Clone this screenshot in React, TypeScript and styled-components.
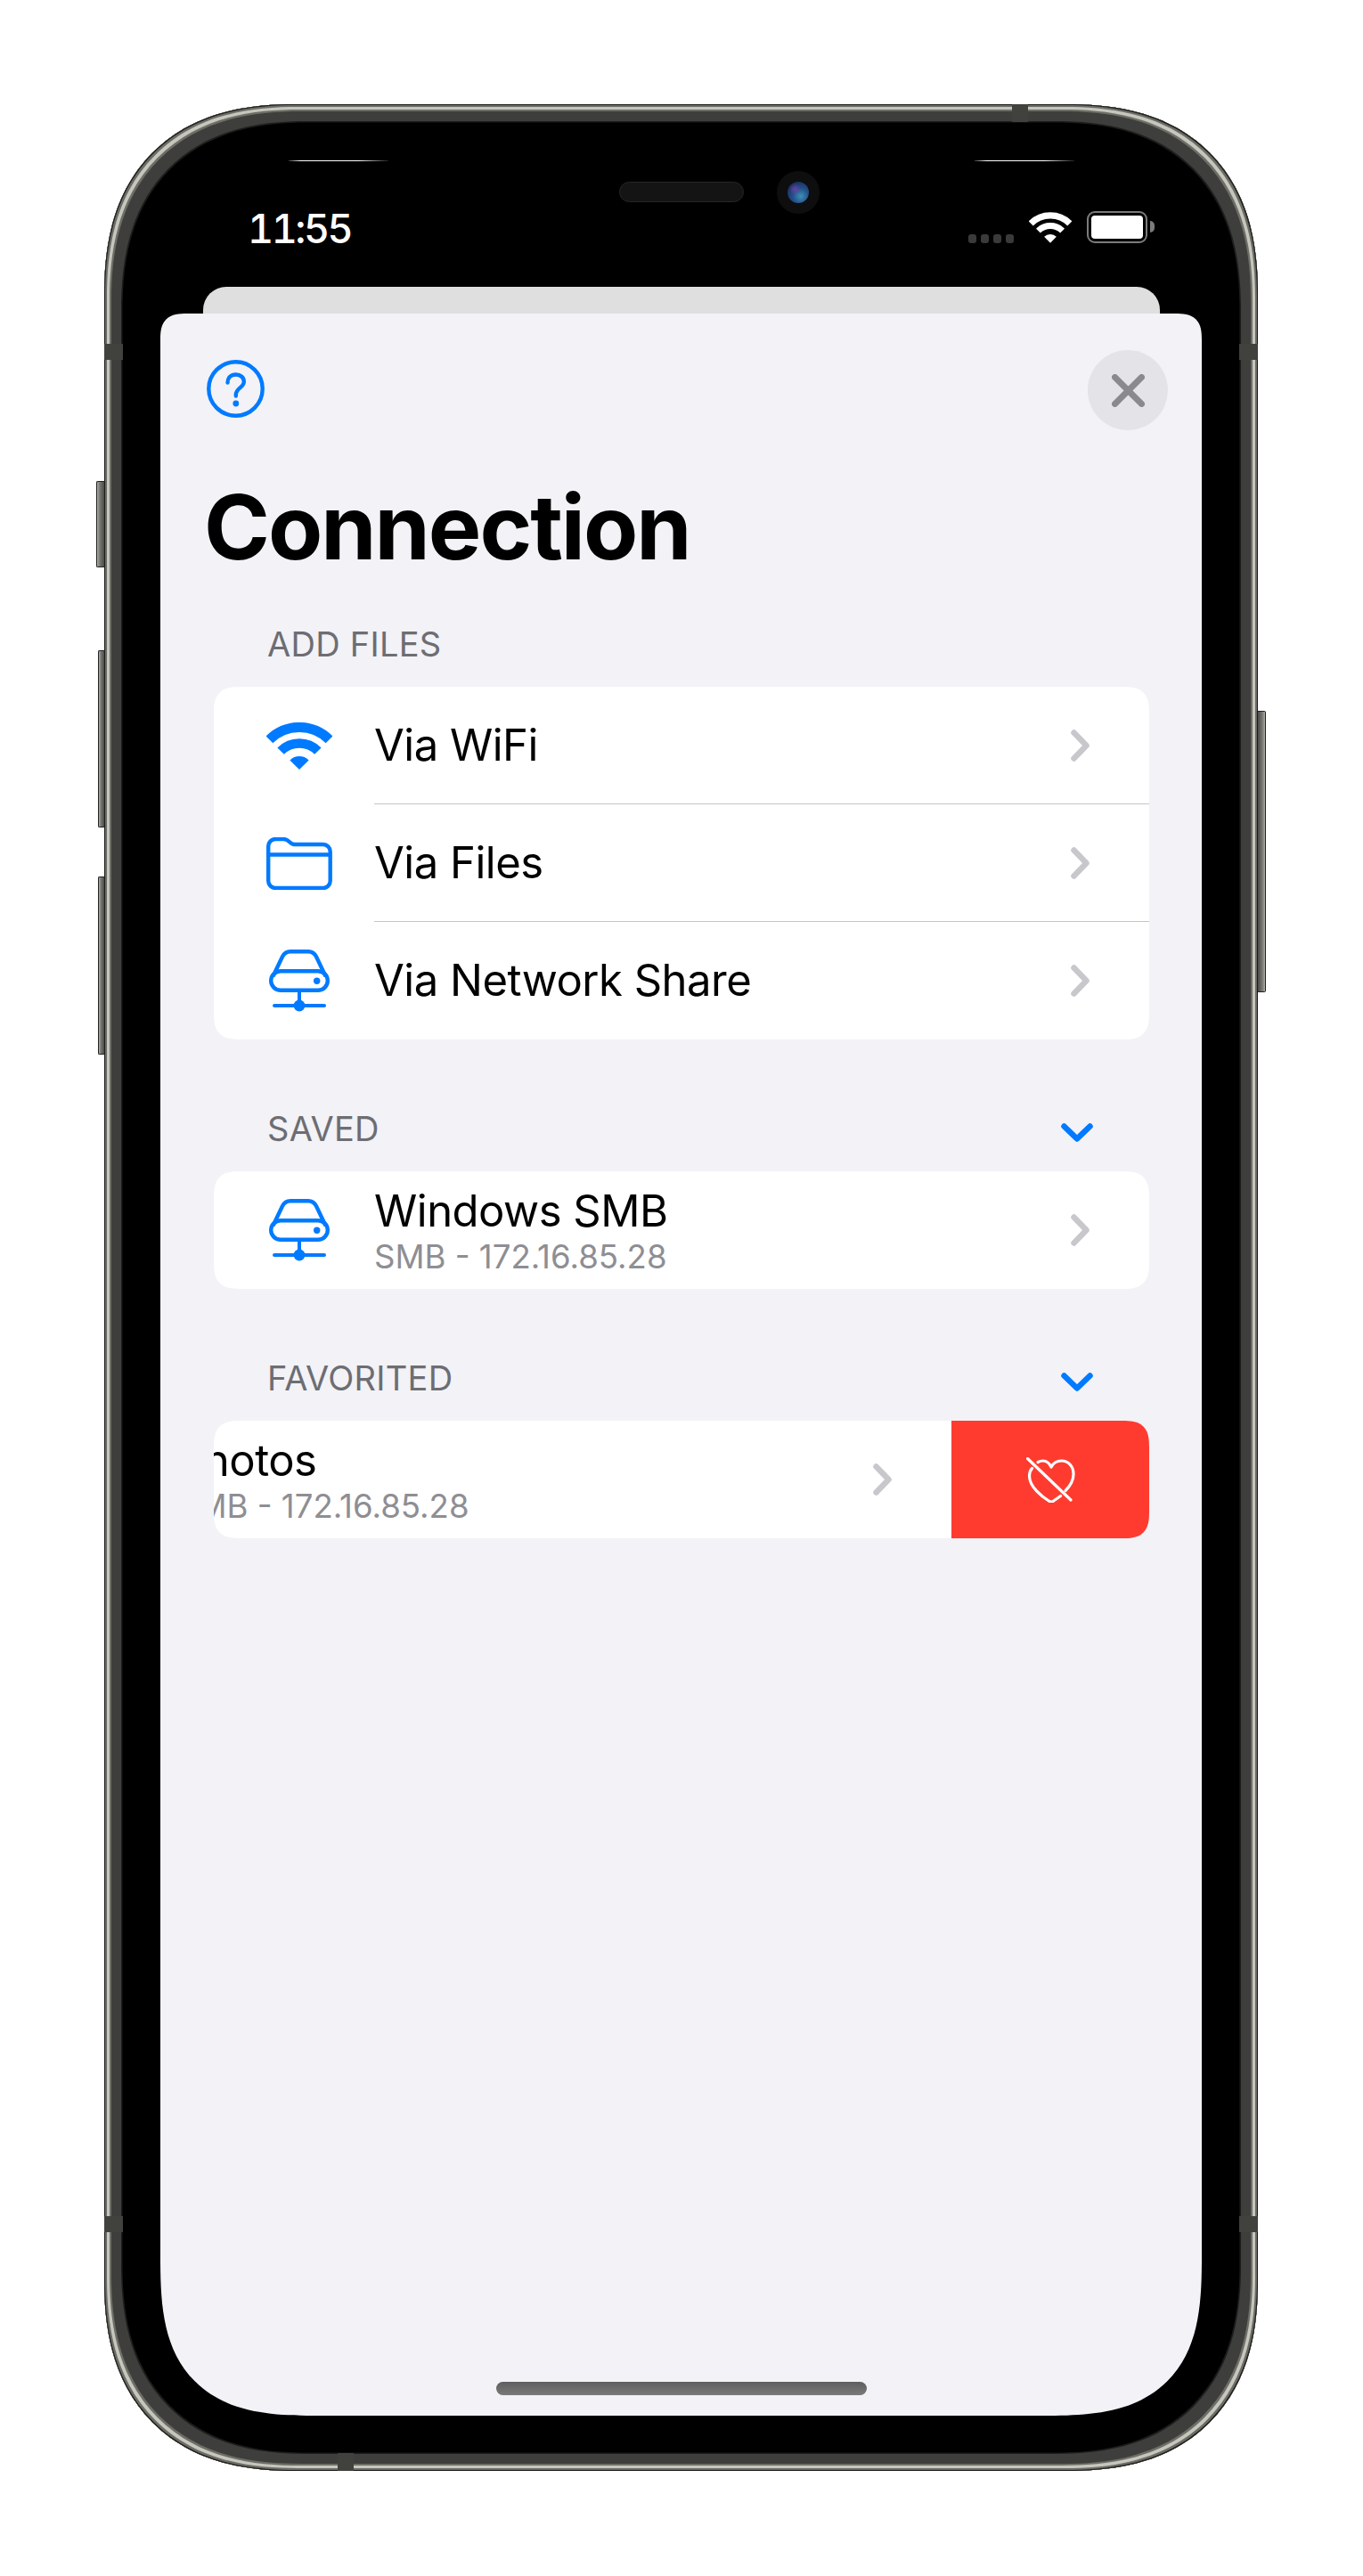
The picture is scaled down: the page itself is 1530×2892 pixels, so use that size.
import React from "react";
import styled, { createGlobalStyle } from "styled-components";

const BLUE = "#007aff";

const GlobalStyle = createGlobalStyle`
  html, body {
    margin: 0;
    padding: 0;
    background: #fff;
  }
  body {
    font-family: Inter, "Liberation Sans", sans-serif;
  }
`;

function WifiIcon({ width, height }: { width: number; height: number }) {
  return (
    <svg width={width} height={height} viewBox="0 0 74 53" fill="none" stroke="currentColor">
      <path d="M3.4 19.4A47.5 47.5 0 0 1 70.6 19.4" strokeWidth="11" />
      <path d="M16.1 32.1A29.5 29.5 0 0 1 57.9 32.1" strokeWidth="10.5" />
      <path d="M37 53L26.4 42.4A15 15 0 0 1 47.6 42.4Z" fill="currentColor" stroke="none" />
    </svg>
  );
}

function FolderIcon() {
  return (
    <svg width="74" height="59" viewBox="0 0 74 59" fill="none" stroke={BLUE} strokeWidth="4.4">
      <path d="M2.2 10a8 8 0 0 1 8-8h9c3 0 4.5 1 6.5 3c2 2 3.5 3 6 3h32a8 8 0 0 1 8 8v33a8 8 0 0 1-8 8H10.2a8 8 0 0 1-8-8Z" />
      <path d="M2.2 19.5H71.8" />
    </svg>
  );
}

function DriveIcon() {
  return (
    <svg width="68" height="70" viewBox="0 0 68 70" fill="none" stroke={BLUE} strokeWidth="4.4">
      <rect x="2.2" y="24.2" width="63.6" height="21.6" rx="10.8" />
      <path d="M4.5 30L15 8C17 4 19.5 2.2 24 2.2H44C48.5 2.2 51 4 53 8L63.5 30" />
      <path d="M34 48V63M6 63H62" strokeLinecap="round" strokeWidth="4" />
      <circle cx="34" cy="63" r="6.5" fill={BLUE} stroke="none" />
      <circle cx="53.7" cy="35.2" r="3.7" fill={BLUE} stroke="none" />
    </svg>
  );
}

function HeartSlashIcon() {
  return (
    <svg width="55" height="51" viewBox="0 0 55 51" fill="none" stroke="#fff" strokeWidth="3.2" strokeLinecap="round" strokeLinejoin="round">
      <path d="M13 5.5C15 4.5 17 4 19 4C23 4 26 7 28 11C30 7 33 4 39.5 4C48 4 53 11 53 19C53 26 49.5 32 44 37.5" />
      <path d="M6.5 12.5C4 15 3.5 18 3.5 21C3.5 33 17 44 26 49.5C27.5 50.3 29 50.3 30 49.5L38.5 43.5" />
      <path d="M1.5 1.5L50 48" />
    </svg>
  );
}

function RowChevron() {
  return (
    <svg width="21" height="36" viewBox="0 0 21 36" fill="none" stroke="#c7c7cc" strokeWidth="6.5" strokeLinecap="round" strokeLinejoin="round">
      <path d="M3.5 3.5L17.5 18L3.5 32.5" />
    </svg>
  );
}

function SectionChevron() {
  return (
    <svg width="36" height="21" viewBox="0 0 36 21" fill="none" stroke={BLUE} strokeWidth="6.5" strokeLinecap="round" strokeLinejoin="round">
      <path d="M3.5 3.5L18 17.5L32.5 3.5" />
    </svg>
  );
}

function HelpIcon() {
  return (
    <svg width="65" height="65" viewBox="0 0 65 65" fill="none" stroke={BLUE}>
      <circle cx="32.5" cy="32.5" r="30.2" strokeWidth="4.4" />
      <path d="M23.5 25.5C23.5 20 27.5 16.5 32.8 16.5C38 16.5 41.8 19.8 41.8 24.5C41.8 31 32.8 32 32.8 39V40.5" strokeWidth="4.4" strokeLinecap="round" />
      <circle cx="32.8" cy="49" r="3.4" fill={BLUE} stroke="none" />
    </svg>
  );
}

function CloseIcon() {
  return (
    <svg width="37" height="37" viewBox="0 0 37 37" fill="none" stroke="#8a8a8e" strokeWidth="7" strokeLinecap="round">
      <path d="M3.5 3.5L33.5 33.5M33.5 3.5L3.5 33.5" />
    </svg>
  );
}

function Row({ icon, title, subtitle, divider }: { icon: React.ReactNode; title: string; subtitle?: string; divider?: boolean }) {
  return (
    <RowWrap>
      <RowIcon>{icon}</RowIcon>
      <RowBody $divider={divider}>
        <RowText>
          <RowTitle $compact={!!subtitle}>{title}</RowTitle>
          {subtitle && <RowSubtitle>{subtitle}</RowSubtitle>}
        </RowText>
        <RowChevron />
      </RowBody>
    </RowWrap>
  );
}

export default function App() {
  return (
    <>
      <GlobalStyle />
      <Page>
        <Device>
          <SideButton $side="left" $top={423} $height={97} $depth={9} />
          <SideButton $side="left" $top={613} $height={199} $depth={7} />
          <SideButton $side="left" $top={867} $height={200} $depth={7} />
          <SideButton $side="right" $top={681} $height={316} $depth={9} />
          <AntennaBand $edge="top" $offset={1019} />
          <AntennaBand $edge="bottom" $offset={262} />
          <AntennaBand $edge="left" $offset={269} />
          <AntennaBand $edge="left" $offset={2371} />
          <AntennaBand $edge="right" $offset={269} />
          <AntennaBand $edge="right" $offset={2371} />
          <Glint $left={207} />
          <Glint $left={977} />
          <Speaker />
          <Camera>
            <Lens />
          </Camera>

          <StatusBar>
            <Clock>11:55</Clock>
            <StatusIcons>
              <SignalDots>
                <SignalDot />
                <SignalDot />
                <SignalDot />
                <SignalDot />
              </SignalDots>
              <WifiIcon width={48} height={35} />
              <Battery>
                <BatteryFill />
              </Battery>
            </StatusIcons>
          </StatusBar>

          <BackCard />
          <Sheet>
            <TopBar>
              <HelpButton>
                <HelpIcon />
              </HelpButton>
              <CloseButton>
                <CloseIcon />
              </CloseButton>
            </TopBar>
            <Title>Connection</Title>

            <Section>
              <SectionHeader>
                <SectionLabel>ADD FILES</SectionLabel>
              </SectionHeader>
              <Card>
                <Row icon={<BlueWifi><WifiIcon width={74} height={53} /></BlueWifi>} title="Via WiFi" divider />
                <Row icon={<FolderIcon />} title="Via Files" divider />
                <Row icon={<DriveIcon />} title="Via Network Share" />
              </Card>
            </Section>

            <Section>
              <SectionHeader>
                <SectionLabel>SAVED</SectionLabel>
                <SectionToggle>
                  <SectionChevron />
                </SectionToggle>
              </SectionHeader>
              <Card>
                <Row icon={<DriveIcon />} title="Windows SMB" subtitle="SMB - 172.16.85.28" />
              </Card>
            </Section>

            <Section>
              <SectionHeader>
                <SectionLabel>FAVORITED</SectionLabel>
                <SectionToggle>
                  <SectionChevron />
                </SectionToggle>
              </SectionHeader>
              <SwipeCard>
                <SwipedContent>
                  <Row icon={<DriveIcon />} title="Photos" subtitle="SMB - 172.16.85.28" />
                </SwipedContent>
                <SwipeAction>
                  <HeartSlashIcon />
                </SwipeAction>
              </SwipeCard>
            </Section>

            <HomeBar />
          </Sheet>
        </Device>
      </Page>
    </>
  );
}

const Page = styled.div`
  width: 1530px;
  height: 2892px;
  padding: 117px 0 0 117px;
  box-sizing: border-box;
  background: #fff;
  overflow: hidden;
`;

const Device = styled.div`
  position: relative;
  width: 1295px;
  height: 2657px;
  box-sizing: border-box;
  padding-top: 20px;
  display: flex;
  flex-direction: column;
  align-items: center;
  background: #000;
  border-radius: 215px;
  corner-shape: superellipse(1.25);
  box-shadow:
    inset 0 0 0 1px #1c1c1a,
    inset 0 0 0 3px #6b6b66,
    inset 0 0 0 6px #c6c6bc,
    inset 0 0 0 8px #6e6e69,
    inset 0 0 0 19px #3e3e3c,
    inset 0 0 0 20.5px #1d1d1c;
`;

const SideButton = styled.div<{ $side: "left" | "right"; $top: number; $height: number; $depth: number }>`
  position: absolute;
  top: ${(p) => p.$top}px;
  ${(p) => p.$side}: ${(p) => -p.$depth}px;
  width: ${(p) => p.$depth}px;
  height: ${(p) => p.$height}px;
  box-sizing: border-box;
  border: 1px solid #222;
  border-${(p) => (p.$side === "left" ? "right" : "left")}: none;
  border-radius: ${(p) => (p.$side === "left" ? "2px 0 0 2px" : "0 2px 2px 0")};
  background: linear-gradient(
    ${(p) => (p.$side === "left" ? "90deg" : "270deg")},
    #b0b0a8 0,
    #7a7a75 35%,
    #4a4a48 100%
  );
`;

const AntennaBand = styled.div<{ $edge: "top" | "bottom" | "left" | "right"; $offset: number }>`
  position: absolute;
  background: #41413e;
  ${(p) =>
    p.$edge === "top" || p.$edge === "bottom"
      ? `${p.$edge}: 0; left: ${p.$offset}px; width: 18px; height: 20px;`
      : `${p.$edge}: 0; top: ${p.$offset}px; width: 21px; height: 18px;`}
`;

const Glint = styled.div<{ $left: number }>`
  position: absolute;
  top: 63px;
  left: ${(p) => p.$left}px;
  width: 112px;
  height: 1px;
  background: linear-gradient(90deg, rgba(255, 255, 255, 0.2), #fff 12%, #fff 70%, rgba(255, 255, 255, 0.1));
`;

const Speaker = styled.div`
  position: absolute;
  top: 87px;
  left: 578px;
  width: 140px;
  height: 23px;
  box-sizing: border-box;
  border: 1px solid #262626;
  border-radius: 12px;
  background: #141414;
`;

const Camera = styled.div`
  position: absolute;
  top: 75px;
  left: 755px;
  width: 48px;
  height: 48px;
  display: flex;
  align-items: center;
  justify-content: center;
  border-radius: 50%;
  background: #0e0e0f;
`;

const Lens = styled.div`
  width: 24px;
  height: 24px;
  border-radius: 50%;
  background:
    radial-gradient(circle at 35% 35%, rgba(130, 60, 170, 0.8) 0, rgba(130, 60, 170, 0) 28%),
    radial-gradient(circle at 62% 68%, #3f8fb8 0, #24508a 40%, #1a2f5c 78%, #111d3a 100%);
`;

const StatusBar = styled.div`
  flex: 0 0 185px;
  width: 1295px;
  box-sizing: border-box;
  padding: 0 124px 49px 161px;
  display: flex;
  align-items: flex-end;
  justify-content: space-between;
`;

const Clock = styled.div`
  color: #fff;
  font-size: 45px;
  font-weight: 500;
  line-height: 32px;
  font-feature-settings: "tnum";
  letter-spacing: -2.5px;
`;

const StatusIcons = styled.div`
  display: flex;
  align-items: flex-end;
  color: #fff;
`;

const SignalDots = styled.div`
  display: flex;
  gap: 5px;
  margin-right: 17px;
`;

const SignalDot = styled.div`
  width: 9px;
  height: 10px;
  border-radius: 3px;
  background: #3a3a3a;
`;

const Battery = styled.div`
  position: relative;
  width: 68px;
  height: 36px;
  margin-left: 17px;
  box-sizing: border-box;
  padding: 3px;
  border: 2.5px solid #7b7b7b;
  border-radius: 9px;

  &::after {
    content: "";
    position: absolute;
    top: 9px;
    right: -10px;
    width: 5px;
    height: 13px;
    border-radius: 0 5px 5px 0;
    background: #7b7b7b;
  }
`;

const BatteryFill = styled.div`
  width: 100%;
  height: 100%;
  border-radius: 4px;
  background: #fff;
`;

const BackCard = styled.div`
  flex: 0 0 30px;
  width: 1074px;
  border-radius: 26px 26px 0 0;
  background: #dfdfdf;
`;

const Sheet = styled.div`
  position: relative;
  flex: 0 0 2360px;
  width: 1169px;
  box-sizing: border-box;
  padding: 41px 59px 0 60px;
  display: flex;
  flex-direction: column;
  background: #f2f2f7;
  border-radius: 30px 30px 178px 178px;
  corner-shape: superellipse(1.5);
  overflow: hidden;
`;

const TopBar = styled.div`
  display: flex;
  align-items: center;
  justify-content: space-between;
  margin: 0 -21px 0 -8px;
`;

const HelpButton = styled.div`
  display: flex;
  margin-bottom: 3px;
`;

const CloseButton = styled.div`
  width: 90px;
  height: 90px;
  display: flex;
  align-items: center;
  justify-content: center;
  border-radius: 50%;
  background: #e3e3e8;
`;

const Title = styled.h1`
  margin: 46px 0 47px -11px;
  color: #000;
  font-size: 100px;
  font-weight: 700;
  line-height: 125px;
  letter-spacing: -2px;
`;

const Section = styled.section`
  margin-bottom: 78px;
`;

const SectionHeader = styled.div`
  height: 44px;
  margin-bottom: 26px;
  padding: 0 63px 0 60px;
  display: flex;
  align-items: center;
  justify-content: space-between;
`;

const SectionLabel = styled.div`
  color: #6d6d72;
  font-size: 38px;
  line-height: 44px;
  letter-spacing: 0.25px;
`;

const SectionToggle = styled.div`
  display: flex;
  margin-top: 9px;
`;

const Card = styled.div`
  background: #fff;
  border-radius: 30px;
  corner-shape: superellipse(1.5);
  overflow: hidden;
`;

const SwipeCard = styled(Card)`
  display: flex;
`;

const SwipedContent = styled.div`
  flex: 0 0 100%;
  margin-left: -222px;
`;

const SwipeAction = styled.div`
  flex: 0 0 222px;
  display: flex;
  align-items: center;
  justify-content: center;
  background: #ff3b30;
`;

const RowWrap = styled.div`
  height: 132px;
  display: flex;
`;

const RowIcon = styled.div`
  flex: 0 0 180px;
  display: flex;
  align-items: center;
  justify-content: center;
  padding-left: 12px;
  box-sizing: border-box;
`;

const BlueWifi = styled.div`
  display: flex;
  color: ${BLUE};
`;

const RowBody = styled.div<{ $divider?: boolean }>`
  flex: 1;
  display: flex;
  align-items: center;
  justify-content: space-between;
  padding-right: 67px;
  box-shadow: ${(p) => (p.$divider ? "inset 0 -1px 0 #c6c6c8" : "none")};
`;

const RowText = styled.div`
  display: flex;
  flex-direction: column;
`;

const RowTitle = styled.div<{ $compact: boolean }>`
  margin-top: ${(p) => (p.$compact ? "5px" : "0")};
  color: #000;
  font-size: 49px;
  line-height: ${(p) => (p.$compact ? "50px" : "60px")};
  letter-spacing: -0.5px;
`;

const RowSubtitle = styled.div`
  margin-top: 5px;
  color: #8e8e93;
  font-size: 36.6px;
  line-height: 43px;
`;

const HomeBar = styled.div`
  position: absolute;
  left: 377px;
  bottom: 23px;
  width: 416px;
  height: 15px;
  border-radius: 8px;
  background: linear-gradient(#5e5e5e, #7a7a7a);
`;
